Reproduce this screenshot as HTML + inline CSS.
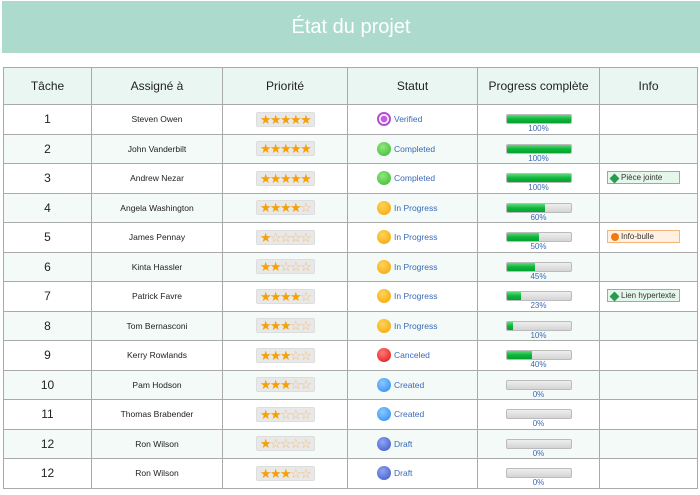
<!DOCTYPE html>
<html><head><meta charset="utf-8"><style>
body{margin:0;width:700px;height:495px;background:#fff;font-family:"Liberation Sans",sans-serif;position:relative;overflow:hidden}
.bar{position:absolute;left:2px;top:1px;width:698px;height:52px;background:#acdacc;color:#fff;font-size:20px;text-align:center;line-height:52px}
table{position:absolute;left:3px;top:67px;border-collapse:collapse;table-layout:fixed}
td,th{border:1px solid #aaa;text-align:center;padding:0;position:relative}
th{height:36px;background:#eaf6f1;font-weight:normal;font-size:12px;color:#222}
td{height:28.5px;font-size:8.5px;color:#222}
tr:nth-child(odd) td{background:#f3faf7}
td.n{font-size:12px}
td.p{padding-top:9px;vertical-align:top;height:19.5px}
.st{display:inline-block;width:57px;height:13px;background:#e8e8e8;border:1px solid #ddd;border-radius:2px;font-size:13px;line-height:13px;letter-spacing:-1.6px;color:#f7a000;vertical-align:middle;overflow:hidden}
.st i{font-style:normal;color:#f3b86a}
.s{display:flex;align-items:center;padding-left:29px;color:#3a6ab8;font-size:8.5px}
.d{width:14px;height:14px;border-radius:50%;margin-right:3px;box-sizing:border-box}
.pb{margin:0 auto;width:64px;height:8px;border:1px solid #bbb;border-radius:2px;background:linear-gradient(#eee,#d4d4d4);overflow:hidden}
.pb i{display:block;height:100%;background:linear-gradient(#5fd87a,#0cb83a 50%,#08a030)}
.pt{color:#3a6ab8;font-size:8px;line-height:9px}
.info{position:absolute;left:7px;top:7px;height:13px;width:73px;font-size:8px;line-height:12px;text-align:left;padding-left:13px;box-sizing:border-box;color:#333}
.info b{position:absolute;left:3px;top:3px;width:7px;height:7px}
</style></head><body>
<div class="bar">État du projet</div>
<table>
<colgroup><col style="width:88px"><col style="width:131px"><col style="width:125px"><col style="width:130px"><col style="width:122px"><col style="width:98px"></colgroup>
<tr><th>Tâche</th><th>Assigné à</th><th>Priorité</th><th>Statut</th><th>Progress complète</th><th>Info</th></tr>
<tr><td class="n">1</td><td>Steven Owen</td><td><span class="st">★★★★★</span></td><td><div class="s"><div class="d" style="border:2px solid #b34fd0;background:radial-gradient(#c060e0 45%,#fff 50%)"></div>Verified</div></td><td class="p"><div class="pb"><i style="width:100%"></i></div><div class="pt">100%</div></td><td></td></tr>
<tr><td class="n">2</td><td>John Vanderbilt</td><td><span class="st">★★★★★</span></td><td><div class="s"><div class="d" style="background:radial-gradient(circle at 40% 35%,#8fe87f,#3cb52c)"></div>Completed</div></td><td class="p"><div class="pb"><i style="width:100%"></i></div><div class="pt">100%</div></td><td></td></tr>
<tr><td class="n">3</td><td>Andrew Nezar</td><td><span class="st">★★★★★</span></td><td><div class="s"><div class="d" style="background:radial-gradient(circle at 40% 35%,#8fe87f,#3cb52c)"></div>Completed</div></td><td class="p"><div class="pb"><i style="width:100%"></i></div><div class="pt">100%</div></td><td><div class="info" style="background:#e5f6ea;border:1px solid #6cc68a"><b style="background:#2a9a50;transform:rotate(45deg)"></b>Pièce jointe</div></td></tr>
<tr><td class="n">4</td><td>Angela Washington</td><td><span class="st">★★★★<i>☆</i></span></td><td><div class="s"><div class="d" style="background:radial-gradient(circle at 40% 35%,#ffd45a,#f4a200)"></div>In Progress</div></td><td class="p"><div class="pb"><i style="width:60%"></i></div><div class="pt">60%</div></td><td></td></tr>
<tr><td class="n">5</td><td>James Pennay</td><td><span class="st">★<i>☆☆☆☆</i></span></td><td><div class="s"><div class="d" style="background:radial-gradient(circle at 40% 35%,#ffd45a,#f4a200)"></div>In Progress</div></td><td class="p"><div class="pb"><i style="width:50%"></i></div><div class="pt">50%</div></td><td><div class="info" style="background:#fff0e2;border:1px solid #f5b57a"><b style="background:#f07a10;border-radius:50%;width:8px;height:8px;top:2px"></b>Info-bulle</div></td></tr>
<tr><td class="n">6</td><td>Kinta Hassler</td><td><span class="st">★★<i>☆☆☆</i></span></td><td><div class="s"><div class="d" style="background:radial-gradient(circle at 40% 35%,#ffd45a,#f4a200)"></div>In Progress</div></td><td class="p"><div class="pb"><i style="width:45%"></i></div><div class="pt">45%</div></td><td></td></tr>
<tr><td class="n">7</td><td>Patrick Favre</td><td><span class="st">★★★★<i>☆</i></span></td><td><div class="s"><div class="d" style="background:radial-gradient(circle at 40% 35%,#ffd45a,#f4a200)"></div>In Progress</div></td><td class="p"><div class="pb"><i style="width:23%"></i></div><div class="pt">23%</div></td><td><div class="info" style="background:#e5f6ea;border:1px solid #6cc68a"><b style="background:#2a9a50;transform:rotate(45deg)"></b>Lien hypertexte</div></td></tr>
<tr><td class="n">8</td><td>Tom Bernasconi</td><td><span class="st">★★★<i>☆☆</i></span></td><td><div class="s"><div class="d" style="background:radial-gradient(circle at 40% 35%,#ffd45a,#f4a200)"></div>In Progress</div></td><td class="p"><div class="pb"><i style="width:10%"></i></div><div class="pt">10%</div></td><td></td></tr>
<tr><td class="n">9</td><td>Kerry Rowlands</td><td><span class="st">★★★<i>☆☆</i></span></td><td><div class="s"><div class="d" style="background:radial-gradient(circle at 40% 35%,#ff7a7a,#e01010)"></div>Canceled</div></td><td class="p"><div class="pb"><i style="width:40%"></i></div><div class="pt">40%</div></td><td></td></tr>
<tr><td class="n">10</td><td>Pam Hodson</td><td><span class="st">★★★<i>☆☆</i></span></td><td><div class="s"><div class="d" style="background:radial-gradient(circle at 40% 35%,#8ac8ff,#2a88f0)"></div>Created</div></td><td class="p"><div class="pb"></div><div class="pt">0%</div></td><td></td></tr>
<tr><td class="n">11</td><td>Thomas Brabender</td><td><span class="st">★★<i>☆☆☆</i></span></td><td><div class="s"><div class="d" style="background:radial-gradient(circle at 40% 35%,#8ac8ff,#2a88f0)"></div>Created</div></td><td class="p"><div class="pb"></div><div class="pt">0%</div></td><td></td></tr>
<tr><td class="n">12</td><td>Ron Wilson</td><td><span class="st">★<i>☆☆☆☆</i></span></td><td><div class="s"><div class="d" style="background:radial-gradient(circle at 40% 35%,#8fa4f0,#3a56c8)"></div>Draft</div></td><td class="p"><div class="pb"></div><div class="pt">0%</div></td><td></td></tr>
<tr><td class="n">12</td><td>Ron Wilson</td><td><span class="st">★★★<i>☆☆</i></span></td><td><div class="s"><div class="d" style="background:radial-gradient(circle at 40% 35%,#8fa4f0,#3a56c8)"></div>Draft</div></td><td class="p"><div class="pb"></div><div class="pt">0%</div></td><td></td></tr>
</table>
</body></html>
